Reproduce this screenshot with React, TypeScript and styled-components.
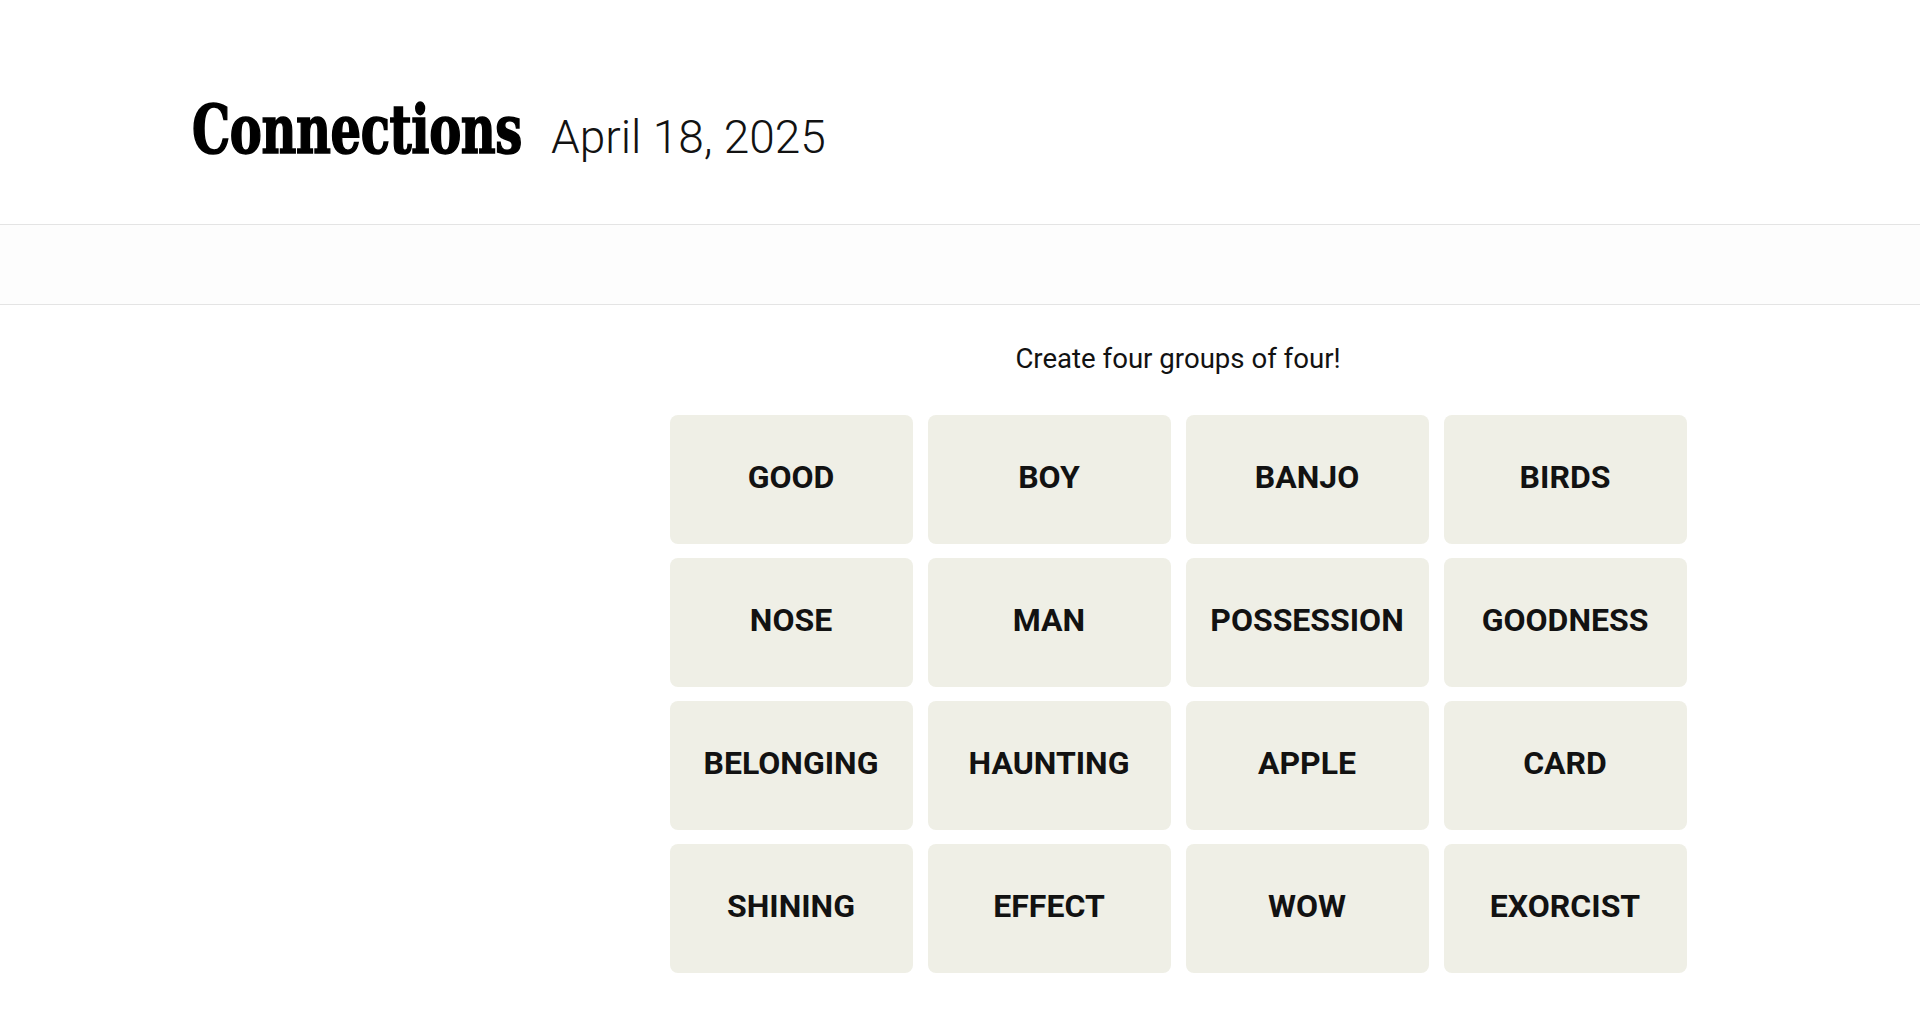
import React from "react";
import styled, { createGlobalStyle } from "styled-components";

const GlobalStyle = createGlobalStyle`
  html, body {
    margin: 0;
    padding: 0;
    background: #ffffff;
  }
  body {
    font-family: Roboto, "Liberation Sans", Arial, sans-serif;
    color: #121212;
  }
  * { box-sizing: border-box; }
`;

const Page = styled.div`
  min-height: 1009px;
  background: #ffffff;
`;

const Header = styled.header`
  height: 225px;
  padding: 95px 0 0 192px;
  border-bottom: 1px solid #e4e4e4;
`;

const TitleRow = styled.div`
  display: flex;
  align-items: baseline;
  gap: 27px;
`;

const TitleBox = styled.h1`
  margin: 0;
  width: 332px;
  white-space: nowrap;
  font-family: "DejaVu Serif Condensed", "DejaVu Serif", serif;
  font-stretch: condensed;
  font-weight: 700;
  font-size: 68px;
  line-height: 1;
  color: #000000;
`;

const TitleText = styled.span`
  display: inline-block;
  transform: scaleX(0.785);
  transform-origin: left center;
  letter-spacing: -0.5px;
  -webkit-text-stroke: 1.6px #000000;
`;

const DateText = styled.span`
  font-family: Roboto, "Liberation Sans", sans-serif;
  font-weight: 300;
  font-size: 46px;
  line-height: 1;
  color: #121212;
`;

const Toolbar = styled.div`
  height: 80px;
  background: #fdfdfd;
  border-bottom: 1px solid #e4e4e4;
`;

const Main = styled.main`
  padding-left: 436px;
  display: flex;
  justify-content: center;
`;

const Game = styled.section`
  width: 1017px;
  display: flex;
  flex-direction: column;
  align-items: center;
`;

const Instruction = styled.p`
  margin: 40px 0 0;
  font-family: Roboto, "Liberation Sans", sans-serif;
  font-weight: 400;
  font-size: 27.6px;
  line-height: 1;
  color: #121212;
`;

const Board = styled.div`
  margin-top: 42px;
  display: grid;
  grid-template-columns: repeat(4, 243px);
  grid-auto-rows: 129px;
  column-gap: 15px;
  row-gap: 14px;
`;

const Tile = styled.button`
  border: none;
  border-radius: 8px;
  background: #efefe6;
  color: #121212;
  font-family: Roboto, "Liberation Sans", sans-serif;
  font-weight: 700;
  font-size: 32px;
  text-transform: uppercase;
  display: flex;
  align-items: center;
  justify-content: center;
  padding: 0 0 5px;
  cursor: pointer;
`;

const words = [
  "GOOD", "BOY", "BANJO", "BIRDS",
  "NOSE", "MAN", "POSSESSION", "GOODNESS",
  "BELONGING", "HAUNTING", "APPLE", "CARD",
  "SHINING", "EFFECT", "WOW", "EXORCIST",
];

export default function App() {
  return (
    <Page>
      <GlobalStyle />
      <Header>
        <TitleRow>
          <TitleBox>
            <TitleText>Connections</TitleText>
          </TitleBox>
          <DateText>April 18, 2025</DateText>
        </TitleRow>
      </Header>
      <Toolbar />
      <Main>
        <Game>
          <Instruction>Create four groups of four!</Instruction>
          <Board>
            {words.map((w) => (
              <Tile key={w}>{w}</Tile>
            ))}
          </Board>
        </Game>
      </Main>
    </Page>
  );
}
